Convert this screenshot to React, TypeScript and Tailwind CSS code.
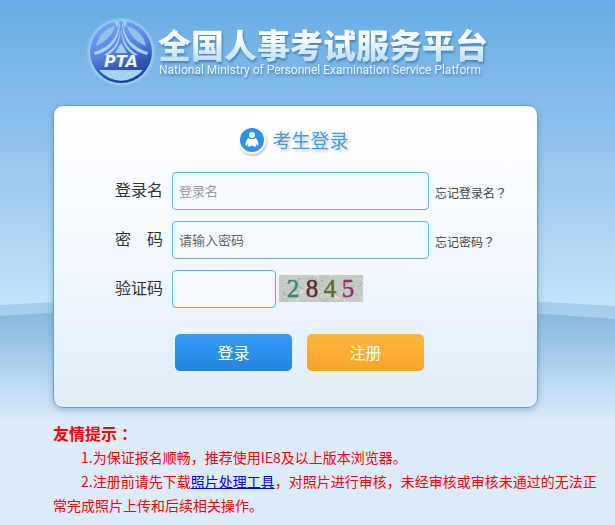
import type { ReactNode } from 'react';

function Backdrop() {
  return (
    <svg
      className="absolute inset-x-0 top-0 -z-10 h-[420px] w-full"
      viewBox="0 0 615 420"
      preserveAspectRatio="none"
      aria-hidden="true"
    >
      <defs>
        <linearGradient id="sky" x1="0" y1="0" x2="0" y2="1">
          <stop offset="0" stopColor="#68ade5" />
          <stop offset="0.25" stopColor="#85bcea" />
          <stop offset="0.5" stopColor="#a7d0f1" />
          <stop offset="0.73" stopColor="#c3e3f8" />
          <stop offset="1" stopColor="#cbe6f9" />
        </linearGradient>
        <linearGradient id="far" gradientUnits="userSpaceOnUse" x1="0" y1="300" x2="0" y2="420">
          <stop offset="0" stopColor="#a3cbeb" />
          <stop offset="1" stopColor="#d9eafa" />
        </linearGradient>
        <linearGradient id="near" gradientUnits="userSpaceOnUse" x1="0" y1="308" x2="0" y2="420">
          <stop offset="0" stopColor="#86b8e2" />
          <stop offset="0.3" stopColor="#98c4e8" />
          <stop offset="0.65" stopColor="#b9d8f1" />
          <stop offset="1" stopColor="#d8e9f9" />
        </linearGradient>
      </defs>
      <rect width="615" height="420" fill="url(#sky)" />
      <path d="M0 305 Q310 287 615 306 V420 H0Z" fill="url(#far)" />
      <path d="M0 316 Q310 294 615 319 V420 H0Z" fill="url(#near)" />
      <path d="M0 341 Q310 310 615 344 V420 H0Z" fill="#ffffff" opacity="0.04" />
    </svg>
  );
}

function Logo() {
  return (
    <svg
      className="size-[70px] shrink-0"
      viewBox="0 0 70 70"
      role="img"
      aria-label="PTA"
    >
      <defs>
        <linearGradient id="disc" gradientUnits="userSpaceOnUse" x1="22" y1="4" x2="44" y2="66">
          <stop offset="0" stopColor="#7ba4f6" />
          <stop offset="0.45" stopColor="#5a86e2" />
          <stop offset="0.75" stopColor="#2c58b4" />
          <stop offset="1" stopColor="#173f97" />
        </linearGradient>
        <radialGradient id="glow">
          <stop offset="0.86" stopColor="#d9efff" stopOpacity="0.55" />
          <stop offset="1" stopColor="#d9efff" stopOpacity="0" />
        </radialGradient>
        <clipPath id="round">
          <circle cx="35" cy="35" r="31" />
        </clipPath>
      </defs>
      <circle cx="35" cy="35" r="35" fill="url(#glow)" />
      <circle cx="35" cy="35" r="31" fill="url(#disc)" />
      <g clipPath="url(#round)">
        <path d="M29 9 C27 17 20 25 10 29 A26 26 0 0 1 29 9Z" fill="#8dc2ee" />
        <path d="M41 9 C43 17 50 25 60 29 A26 26 0 0 0 41 9Z" fill="#8dc2ee" />
        <path d="M28 2 L31 11 L34 3Z M42 2 L39 11 L36 3Z" fill="#a4d0f3" />
        <path d="M33 7 C32 20 23 31 8 35 L9 38 C25 34 33 23 34 7Z" fill="#a9d3f4" />
        <path d="M37 7 C38 20 47 31 62 35 L61 38 C45 34 37 23 36 7Z" fill="#a9d3f4" />
        <path d="M34 14 C33 25 28 32 18 38 H22 C30 33 34 26 34.500 14Z" fill="#a9d3f4" />
        <path d="M36 14 C37 25 42 32 52 38 H48 C40 33 36 26 35.500 14Z" fill="#a9d3f4" />
        <path d="M35 26 L41 36 H29Z" fill="#9dcdf2" />
        <path d="M13 53 H57 A28 28 0 0 1 13 53Z" fill="#a6d3f5" />
      </g>
      <text
        x="35"
        y="50"
        textAnchor="middle"
        fontFamily="DejaVu Sans, sans-serif"
        fontWeight="bold"
        fontStyle="italic"
        fontSize="16"
        fill="#f1f3f8"
      >
        PTA
      </text>
    </svg>
  );
}

function Captcha() {
  const strokes = Array.from({ length: 90 }, (_, i) => {
    const x = (i * 37 + ((i * i) % 13)) % 88;
    const y = (i * 23 + ((i * i) % 7)) % 29;
    const dx = ((i * 7) % 11) - 5;
    const dy = ((i * 5) % 9) - 4;
    return { d: `M${x} ${y}l${dx} ${dy}`, color: ['#a4b9aa', '#e2e2df', '#a5afaa', '#cbb5b4', '#d7e2da'][i % 5] };
  });
  const digits = [
    { x: 14, value: '2', color: '#368577' },
    { x: 33, value: '8', color: '#5b2d31' },
    { x: 51, value: '4', color: '#5f6a2b' },
    { x: 69, value: '5', color: '#96305f' },
  ];
  return (
    <svg className="mb-px h-[27px] w-[84px] shrink-0" viewBox="0 0 84 27" role="img" aria-label="验证码 2845">
      <rect width="84" height="27" fill="#c6cac5" />
      {strokes.map((s, i) => (
        <path key={i} d={s.d} stroke={s.color} strokeWidth="1" fill="none" />
      ))}
      {digits.map((d) => (
        <text
          key={d.value}
          x={d.x}
          y="22"
          textAnchor="middle"
          fontFamily="Liberation Serif, serif"
          fontSize="25"
          fill={d.color}
          stroke={d.color}
          strokeWidth="0.5"
        >
          {d.value}
        </text>
      ))}
    </svg>
  );
}

function UserBadge() {
  return (
    <svg className="size-7 shrink-0 drop-shadow-[1px_2px_1px_rgba(0,0,0,0.2)]" viewBox="0 0 28 28" aria-hidden="true">
      <circle cx="14" cy="14" r="14" fill="#fff" />
      <circle cx="14" cy="14" r="12" fill="#2b91ea" />
      <circle cx="14" cy="9" r="3" fill="#fff" />
      <path
        d="M10.500 12 Q14 14.500 17.500 12 Q20.500 14 20.500 19.500 H18.500 L18 17 V20.500 H15.500 Q14 18.500 12.500 20.500 H10 V17 L9.500 19.500 H7.500 Q7.500 14 10.500 12Z"
        fill="#fff"
      />
    </svg>
  );
}

function Field({ id, label, children }: { id: string; label: string; children: ReactNode }) {
  return (
    <div className="flex items-center">
      <label htmlFor={id} className="w-[57px] shrink-0 pb-1 text-base whitespace-pre text-[#333]">
        {label}
      </label>
      {children}
    </div>
  );
}

function CenteredMark({ children }: { children: string }) {
  return <span className="font-['Noto_Sans_CJK_TC',sans-serif]">{children}</span>;
}

const inputStyle =
  'h-[38px] rounded border border-[#63b2ef] bg-[#f5faff] px-1.5 pb-0.5 text-[13px] text-[#555] outline-none';

const forgotStyle = 'ml-1.5 pt-1 text-xs whitespace-nowrap text-[#444]';

export default function App() {
  return (
    <div className="relative isolate min-h-screen bg-[#dcecfb] pr-[17px] pb-2 pl-[53px] font-['Noto_Sans_CJK_SC',sans-serif]">
      <Backdrop />

      <header className="flex items-center pt-[17px] pl-[33px]">
        <Logo />
        <div className="ml-0.5 drop-shadow-[1px_2px_1px_rgba(35,95,155,0.6)]">
          <h1 className="bg-linear-to-b from-white from-30% to-[#c3e1f9] to-90% bg-clip-text text-[33px] leading-9 font-black whitespace-nowrap text-transparent">
            全国人事考试服务平台
          </h1>
          <p className="pl-px font-[Roboto,sans-serif] text-xs leading-4 whitespace-nowrap text-[#e8f4fe]">
            National Ministry of Personnel Examination Service Platform
          </p>
        </div>
      </header>

      <main className="mt-[18px] mr-15 rounded-[10px] border border-[#6fa3cf] bg-linear-to-b from-white via-[#f3f8fe] to-[#dfeef9] pt-5 pb-9 shadow-[0_2px_6px_rgba(60,110,150,0.4)]">
        <h2 className="flex h-7 items-center justify-center gap-1.5 pr-1 text-[19px] leading-6 text-[#459bdf]">
          <UserBadge />
          <span className="drop-shadow-[2px_2px_1px_rgba(0,0,0,0.18)]">考生登录</span>
        </h2>

        <form className="mt-[18px] pl-[61px]" onSubmit={(e) => e.preventDefault()}>
          <div className="flex flex-col gap-[11px]">
            <Field id="login-name" label="登录名">
              <input
                id="login-name"
                type="text"
                placeholder="登录名"
                className={`${inputStyle} w-[257px] placeholder:text-[#999]`}
              />
              <a href="#forgot-name" className={forgotStyle}>
                忘记登录名<CenteredMark>？</CenteredMark>
              </a>
            </Field>
            <Field id="password" label="密　码">
              <input
                id="password"
                type="password"
                placeholder="请输入密码"
                className={`${inputStyle} w-[257px] placeholder:text-[#666]`}
              />
              <a href="#forgot-password" className={forgotStyle}>
                忘记密码<CenteredMark>？</CenteredMark>
              </a>
            </Field>
            <Field id="captcha" label="验证码">
              <input id="captcha" type="text" className={`${inputStyle} mr-[3px] w-[104px]`} />
              <Captcha />
            </Field>
          </div>

          <div className="mt-[26px] flex gap-[15px] pl-15 text-base text-white">
            <button
              type="submit"
              className="h-[37px] w-[117px] rounded-[5px] bg-linear-to-b from-[#349bf5] to-[#2386de] pb-0.5"
            >
              登录
            </button>
            <button
              type="button"
              className="h-[37px] w-[117px] rounded-[5px] bg-linear-to-b from-[#ffb740] to-[#f7a428] pb-0.5"
            >
              注册
            </button>
          </div>
        </form>
      </main>

      <section className="mt-[13px] text-sm leading-6 text-[#ff0000]">
        <h3 className="text-base leading-6 font-bold">
          友情提示<CenteredMark>：</CenteredMark>
        </h3>
        <p className="indent-7">1.为保证报名顺畅，推荐使用IE8及以上版本浏览器。</p>
        <p className="indent-7">
          2.注册前请先下载
          <a href="#photo-tool" className="text-[#0000ff] underline">
            照片处理工具
          </a>
          ，对照片进行审核，未经审核或审核未通过的无法正常完成照片上传和后续相关操作。
        </p>
      </section>
    </div>
  );
}
